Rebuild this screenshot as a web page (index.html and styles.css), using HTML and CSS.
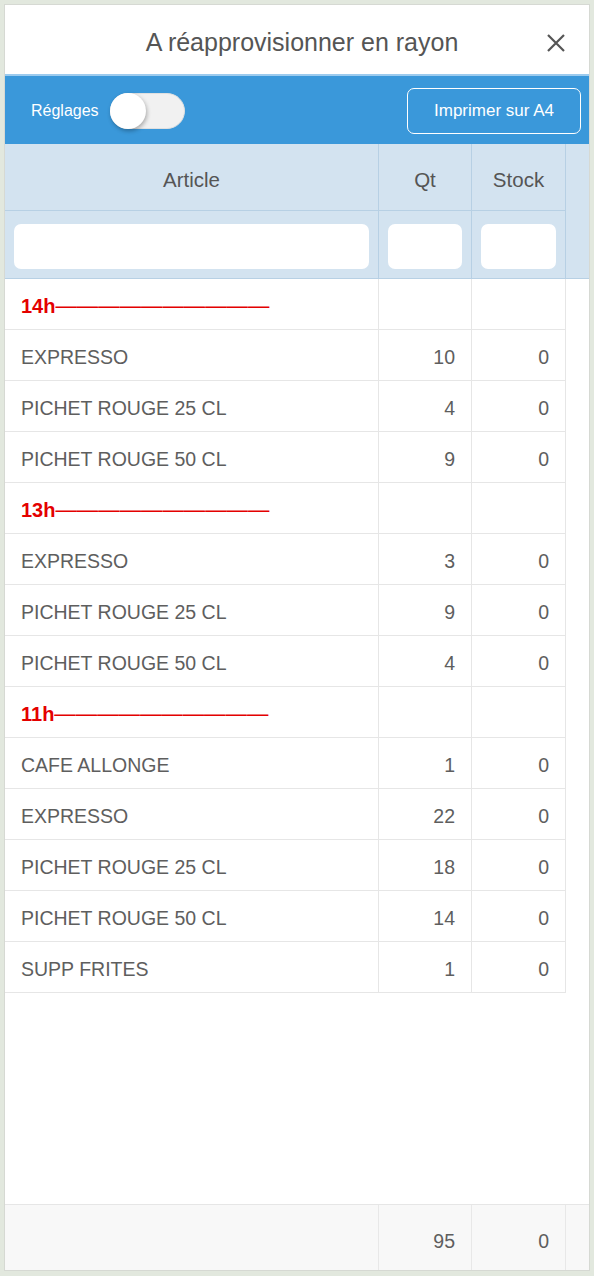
FILE: index.html
```html
<!DOCTYPE html>
<html lang="fr">
<head>
    <meta charset="UTF-8">
    <title>A réapprovisionner en rayon</title>
    <link rel="stylesheet" href="styles.css">
</head>
<body>
    <div class="panel">
        <div class="titlebar">
            <h1>A réapprovisionner en rayon</h1>
            <button class="close" aria-label="Fermer">
                <svg width="20" height="20" viewBox="0 0 20 20">
                    <path d="M2 2 L18 18 M18 2 L2 18" stroke="#555" stroke-width="2.2" fill="none"/>
                </svg>
            </button>
        </div>
        <div class="toolbar">
            <label class="toggle">
                <span>Réglages</span>
                <span class="switch"><span class="knob"></span></span>
            </label>
            <button class="print">Imprimer sur A4</button>
        </div>

        <div class="thead">
            <div class="grid head">
                <div class="cell">Article</div>
                <div class="cell">Qt</div>
                <div class="cell">Stock</div>
            </div>
            <div class="grid filters">
                <div class="cell"><input type="text"></div>
                <div class="cell"><input type="text"></div>
                <div class="cell"><input type="text"></div>
            </div>
        </div>

        <div class="tbody" id="lignes"></div>

        <div class="tfoot">
            <div class="grid">
                <div class="cell"></div>
                <div class="cell num">95</div>
                <div class="cell num">0</div>
            </div>
        </div>
    </div>

    <script>
        // Lignes groupées par heure
        const groupes = [
            { heure: '14h', lignes: [['EXPRESSO', 10, 0], ['PICHET ROUGE 25 CL', 4, 0], ['PICHET ROUGE 50 CL', 9, 0]] },
            { heure: '13h', lignes: [['EXPRESSO', 3, 0], ['PICHET ROUGE 25 CL', 9, 0], ['PICHET ROUGE 50 CL', 4, 0]] },
            { heure: '11h', lignes: [['CAFE ALLONGE', 1, 0], ['EXPRESSO', 22, 0], ['PICHET ROUGE 25 CL', 18, 0], ['PICHET ROUGE 50 CL', 14, 0], ['SUPP FRITES', 1, 0]] }
        ];

        const corps = document.getElementById('lignes');
        let html = '';
        groupes.forEach(g => {
            html += `<div class="grid row"><div class="cell heure"><span>${g.heure}<span class="trait">——————————</span></span></div><div class="cell"></div><div class="cell"></div></div>`;
            g.lignes.forEach(l => {
                html += `<div class="grid row"><div class="cell">${l[0]}</div><div class="cell num">${l[1]}</div><div class="cell num">${l[2]}</div></div>`;
            });
        });
        corps.innerHTML = html;
    </script>
</body>
</html>
```

FILE: styles.css
```css
* {
    box-sizing: border-box;
}
body {
    margin: 4px;
    background-color: #e2e8de;
    font-family: "Liberation Sans", Arial, sans-serif;
    color: #5e5e5e;
}
.panel {
    height: 1267px;
    border: 1px solid #d6d9d3;
    background-color: #ffffff;
    display: flex;
    flex-direction: column;
}
.titlebar {
    height: 69px;
    flex-shrink: 0;
    display: flex;
    align-items: center;
    justify-content: center;
    position: relative;
}
.titlebar h1 {
    margin: 5px 0 0 10px;
    font-size: 25px;
    font-weight: normal;
    color: #555;
}
.close {
    position: absolute;
    right: 23px;
    top: 28px;
    padding: 0;
    border: none;
    background: none;
    width: 20px;
    height: 20px;
}
.toolbar {
    height: 70px;
    flex-shrink: 0;
    background-color: #3a98da;
    border-top: 2px solid #9ccbee;
    display: flex;
    align-items: center;
    justify-content: space-between;
    padding: 2px 8px 0 26px;
}
.toggle {
    display: flex;
    align-items: center;
    gap: 11px;
    color: #ffffff;
    font-size: 16px;
}
.switch {
    width: 75px;
    height: 36px;
    border-radius: 18px;
    background-color: #f1f1f1;
    border: 1px solid #e0e0e0;
    position: relative;
}
.knob {
    position: absolute;
    left: -1px;
    top: -1px;
    width: 36px;
    height: 36px;
    border-radius: 50%;
    background-color: #ffffff;
    box-shadow: 1px 2px 4px rgba(0, 0, 0, 0.3);
}
.print {
    width: 174px;
    height: 46px;
    border: 1px solid #ffffff;
    border-radius: 7px;
    background: transparent;
    color: #ffffff;
    font-family: inherit;
    font-size: 17px;
}
.grid {
    display: grid;
    grid-template-columns: 374px 93px 94px;
}
.cell {
    border-right: 1px solid #e6e6e6;
}
.thead {
    flex-shrink: 0;
    background-color: #d3e3f0;
    border-bottom: 1px solid #b7d0e4;
}
.thead .cell {
    border-right-color: #b7d0e4;
}
.head .cell {
    height: 67px;
    border-bottom: 1px solid #b7d0e4;
    display: flex;
    align-items: center;
    justify-content: center;
    padding-top: 5px;
    font-size: 20.5px;
    color: #555;
}
.filters .cell {
    height: 67px;
    padding: 13px 9px 9px;
}
.filters input {
    display: block;
    width: 100%;
    height: 45px;
    border: none;
    border-radius: 7px;
    background-color: #ffffff;
}
.tbody {
    flex: 1;
}
.row .cell {
    height: 51px;
    border-bottom: 1px solid #e6e6e6;
    display: flex;
    align-items: center;
    padding: 4px 16px 0;
    font-size: 19.5px;
}
.cell.num {
    justify-content: flex-end;
}
.row .heure {
    color: #e40000;
    font-weight: bold;
    font-size: 20px;
    padding-top: 0;
}
.heure > span {
    position: relative;
    top: 2px;
}
.trait {
    font-weight: normal;
    font-size: 21.4px;
}
.tfoot {
    flex-shrink: 0;
    height: 66px;
    background-color: #f8f8f8;
    border-top: 1px solid #e6e6e6;
}
.tfoot .grid {
    height: 100%;
}
.tfoot .cell {
    display: flex;
    align-items: center;
    padding: 7px 16px 0;
    font-size: 19.5px;
    border-right-color: #e8e8e8;
}
```
